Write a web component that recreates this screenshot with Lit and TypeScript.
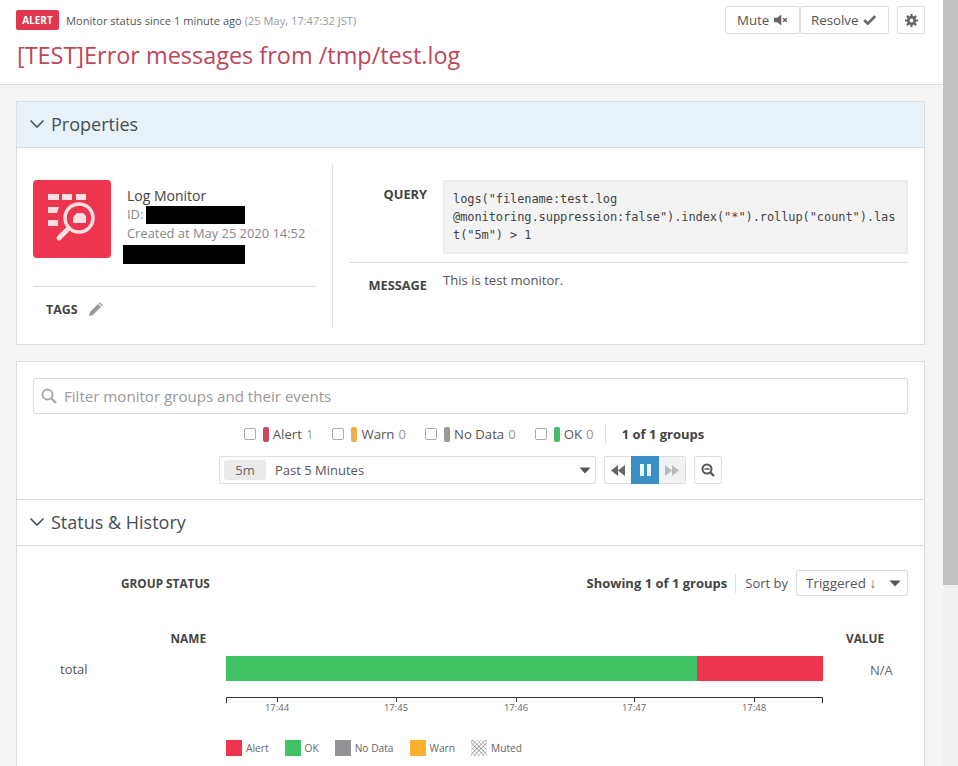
import { LitElement, html, css, svg } from "lit";
import { customElement } from "lit/decorators.js";

const chevron = html`<svg class="chev" width="16" height="10" viewBox="0 0 16 10"><path d="M1.5 1.5 8 8l6.5-6.5" fill="none" stroke="#4a5560" stroke-width="1.6"/></svg>`;
const caret = html`<svg class="caret" width="12" height="7" viewBox="0 0 12 7"><path d="M0.5 0.5h11L6 6.5z" fill="#555"/></svg>`;

@customElement("app-root")
export class AppRoot extends LitElement {
  static styles = css`
    :host { display: flex; width: 958px; height: 766px; overflow: hidden; font-family: "Open Sans", "Noto Sans", sans-serif; color: #444; background: #f5f5f5; }
    * { box-sizing: border-box; }
    .page { width: 943px; flex: none; height: 766px; overflow: hidden; }
    .scroll { width: 15px; flex: none; background: #f1f1f1; }
    .thumb { height: 585px; background: #c1c1c1; }
    .top { background: #fff; height: 85px; border-bottom: 1px solid #ddd; padding: 6px 18px 0 16px; display: flex; justify-content: space-between; }
    .status { display: flex; align-items: center; gap: 7px; font-size: 11.1px; margin-top: 4px; height: 20px; color: #555; }
    .badge { background: #e0364f; color: #fff; font-weight: 700; font-size: 10px; border-radius: 2px; padding: 0 4px; height: 20px; line-height: 20px; width: 43px; text-align: center; }
    .status span.t { color: #999; }
    h1 { margin: 8px 0 0 1px; font-size: 23.45px; font-weight: 400; line-height: 34px; color: #c0465a; }
    .acts { display: flex; align-items: flex-start; }
    .btn { height: 28px; border: 1px solid #ddd; border-radius: 2px; background: #fff; display: flex; align-items: center; gap: 5px; font-size: 13.3px; color: #555; padding: 0 11px; }
    .btn.gear { width: 28px; padding: 0; justify-content: center; margin-left: 8px; }
    .btn.mute { width: 75px; }
    .btn.res { width: 89px; padding-left: 10px; }
    .card { margin: 16px 18px 0 16px; background: #fff; border: 1px solid #ddd; }
    .phead { height: 46px; background: #eaf2f9; border-bottom: 1px solid #ddd; display: flex; align-items: center; padding: 0 0 2px 12px; gap: 6px; font-size: 18px; color: #444e57; }
    .shead { height: 47px; border-top: 1px solid #ddd; border-bottom: 1px solid #ddd; display: flex; align-items: center; padding: 0 0 2px 12px; gap: 6px; font-size: 18px; color: #444e57; }
    .pbody { display: flex; height: 196px; padding-top: 16px; }
    .left { width: 316px; height: 163px; border-right: 1px solid #ddd; padding-left: 16px; }
    .mon { display: flex; height: 123px; border-bottom: 1px solid #ddd; width: 283px; }
    .ico { width: 78px; height: 78px; background: #ed354f; border-radius: 4px; margin-top: 16px; flex: none; }
    .info { margin-left: 16px; margin-top: 22px; font-size: 12.9px; line-height: 19px; color: #888; position: relative; flex: 1; white-space: nowrap; }
    .info .n { color: #444; font-size: 14px; line-height: 19px; }
    .mask { background: #000; display: inline-block; vertical-align: top; height: 18px; }
    .idline { display: flex; }
    .idm { width: 99px; margin: 1px 0 0 3px; }
    .m2 { width: 122px; height: 19px; margin: 2px 0 0 -4px; display: block; }
    .tags { display: flex; align-items: center; gap: 10px; font-size: 12.4px; font-weight: 700; color: #444; padding: 14px 0 0 13px; }
    .right { flex: 1; padding: 16px 16px 0 16px; }
    .row { display: flex; }
    .lbl { width: 78px; text-align: right; font-size: 12.8px; font-weight: 700; color: #444; flex: none; }
    .qlbl { padding-top: 5px; }
    .qrow { border-bottom: 1px solid #ddd; padding-bottom: 8px; }
    .code { margin-left: 16px; flex: 1; background: #f3f3f3; border: 2px solid #ececec; height: 74px; padding: 8px 9px 8px 8px; font: 12px/18px "DejaVu Sans Mono", monospace; letter-spacing: -0.09px; color: #444; word-break: break-all; }
    .msg { font-size: 13.1px; color: #555; margin-left: 16px; padding-top: 8px; line-height: 18px; }
    .mrow .lbl { padding-top: 13px; }
    .group { margin-top: 16px; padding-bottom: 60px; }
    .filter { margin: 16px 16px 0; height: 36px; border: 1px solid #ddd; border-radius: 2px; display: flex; align-items: center; padding-left: 7px; gap: 7px; color: #999; font-size: 15.1px; }
    .states { display: flex; align-items: center; justify-content: center; height: 20px; margin-top: 10px; font-size: 13.2px; color: #555; padding-left: 7px; }
    .st { display: flex; align-items: center; margin-right: 19px; }
    .box { width: 12px; height: 12px; border: 1px solid #aaa; border-radius: 2px; margin-right: 7px; }
    .pill { width: 6px; height: 15px; border-radius: 2px; margin-right: 4px; }
    .st b { font-weight: 400; color: #999; margin-left: 4px; }
    .count { border-left: 1px solid #ddd; height: 19px; line-height: 19px; padding-left: 16px; margin-left: -8px; font-weight: 700; font-size: 13px; color: #444; }
    .time { display: flex; margin: 12px 0 0 202px; height: 28px; }
    .sel { width: 377px; border: 1px solid #ddd; border-radius: 2px; display: flex; align-items: center; padding: 0 5px 0 4px; font-size: 13px; color: #555; position: relative; }
    .chip { background: #eaeaea; border-radius: 3px; width: 42px; height: 20px; line-height: 20px; text-align: center; margin-right: 9px; color: #666; }
    .sel .caret { margin-left: auto; margin-right: -1px; }
    .sort .caret { margin-left: auto; margin-right: 6px; }
    .ctl { display: flex; margin-left: 8px; border: 1px solid #ddd; border-radius: 2px; height: 28px; width: 82px; }
    .ctl div { flex: 1; display: flex; align-items: center; justify-content: center; }
    .ctl .on { background: #3a8fc4; height: 28px; margin-top: -1px; flex: none; width: 28px; }
    .ctl .off { background: #f2f2f2; }
    .zoom { margin-left: 8px; width: 28px; height: 28px; border: 1px solid #ddd; border-radius: 2px; display: flex; align-items: center; justify-content: center; }
    .hr { height: 15px; }
    .gs { display: flex; align-items: center; height: 30px; margin-top: 22px; padding: 0 16px 0 104px; font-size: 11.8px; font-weight: 700; color: #444; }
    .gs .sp { flex: 1; }
    .gs .show { font-size: 13px; }
    .gs .sb { font-weight: 400; font-size: 13px; color: #555; border-left: 1px solid #ddd; margin-left: 8px; padding-left: 9px; margin-right: 8px; line-height: 19px; }
    .sort { width: 112px; height: 26px; border: 1px solid #ddd; border-radius: 2px; display: flex; align-items: center; padding-left: 9px; font-weight: 400; font-size: 13.5px; color: #555; }
    .chart { margin-top: 32px; display: grid; grid-template-columns: 209px 597px 1fr; }
    .hn { text-align: right; font-size: 11.8px; font-weight: 700; color: #444; height: 26px; line-height: 17px; padding-right: 20px; }
    .hv { font-size: 11.8px; font-weight: 700; color: #444; padding-left: 23px; line-height: 17px; }
    .tot { font-size: 13px; color: #555; padding: 1px 0 0 43px; line-height: 25px; }
    .bar { display: flex; height: 25px; }
    .ok { width: 471px; background: #40c364; }
    .bad { width: 126px; background: #ed354f; }
    .na { font-size: 13px; color: #666; padding-left: 47px; line-height: 28px; }
    .axis { grid-column: 2; margin-top: 13px; display: block; overflow: visible; }
    .axis text { font: 9.5px "Open Sans", sans-serif; fill: #666; }
    .legend { display: flex; align-items: center; margin: 19px 0 0 209px; font-size: 10.2px; color: #666; height: 16px; }
    .lg { display: flex; align-items: center; gap: 4px; margin-right: 16px; }
    .sw { width: 16px; height: 16px; }
    .muted { background: repeating-linear-gradient(45deg, #ccc 0 1px, #fff 1px 3px), repeating-linear-gradient(-45deg, #ccc 0 1px, transparent 1px 3px); background-blend-mode: multiply; }
  `;

  render() {
    const ticks: [number, string][] = [[51, "17:44"], [170, "17:45"], [290, "17:46"], [408, "17:47"], [528, "17:48"]];
    return html`
      <div class="page">
        <div class="top">
          <div>
            <div class="status"><span class="badge">ALERT</span><span>Monitor status since 1 minute ago <span class="t">(25 May, 17:47:32 JST)</span></span></div>
            <h1>[TEST]Error messages from /tmp/test.log</h1>
          </div>
          <div class="acts">
            <div class="btn mute">Mute
              <svg width="15" height="12" viewBox="0 0 15 12"><path d="M0 3.500h3.500L8 0v12L3.500 8.500H0z" fill="#666"/><path d="M10 4l4 4m0-4l-4 4" stroke="#666" stroke-width="1.700"/></svg>
            </div>
            <div class="btn res">Resolve
              <svg width="15" height="12" viewBox="0 0 15 12"><path d="M1.300 6 5.300 10 13.500 1.700" fill="none" stroke="#666" stroke-width="3"/></svg>
            </div>
            <div class="btn gear">
              <svg width="13" height="13" viewBox="0 0 13 13"><circle cx="6.500" cy="6.500" r="3.400" fill="none" stroke="#666" stroke-width="2.400"/><path d="M6.500 0v13M0 6.500h13M1.900 1.900l9.200 9.200M11.100 1.900l-9.200 9.200" stroke="#666" stroke-width="2.200"/><circle cx="6.500" cy="6.500" r="1.900" fill="#fff"/></svg>
            </div>
          </div>
        </div>

        <div class="card">
          <div class="phead">${chevron}Properties</div>
          <div class="pbody">
            <div class="left">
              <div class="mon">
                <div class="ico">
                  <svg width="78" height="78" viewBox="0 0 78 78" fill="#f9dfe2">
                    <rect x="15" y="14" width="11" height="6"/><rect x="29" y="14" width="10" height="6"/><rect x="43" y="14" width="10" height="6"/>
                    <path d="M15 27h11l-2 6h-9zM15 40h10v6H15z"/>
                    <circle cx="46" cy="38" r="14" fill="none" stroke="#f9dfe2" stroke-width="3.500"/>
                    <path d="M41 36l3-3h6l3 3v7H40v-5z"/>
                    <path d="M34 50 26 58" stroke="#f9dfe2" stroke-width="5" stroke-linecap="round"/>
                  </svg>
                </div>
                <div class="info">
                  <div class="n">Log Monitor</div>
                  <div class="idline">ID:<span class="mask idm"></span></div>
                  <div>Created at May 25 2020 14:52</div>
                  <span class="mask m2"></span>
                </div>
              </div>
              <div class="tags">TAGS
                <svg width="15" height="15" viewBox="0 0 15 15"><path d="M1 14l1-4 8-8 3 3-8 8z" fill="#999"/><path d="M10.800 1.200l1-.9 3 3-.9 1z" fill="#999"/></svg>
              </div>
            </div>
            <div class="right">
              <div class="row qrow">
                <div class="lbl qlbl">QUERY</div>
                <div class="code">logs("filename:test.log<br />@monitoring.suppression:false").index("*").rollup("count").last("5m") &gt; 1</div>
              </div>
              <div class="row mrow">
                <div class="lbl">MESSAGE</div>
                <div class="msg">This is test monitor.</div>
              </div>
            </div>
          </div>
        </div>

        <div class="card group">
          <div class="filter">
            <svg width="16" height="16" viewBox="0 0 16 16"><circle cx="6.500" cy="6.500" r="5" fill="none" stroke="#aaa" stroke-width="2"/><path d="M10.500 10.500 15 15" stroke="#aaa" stroke-width="2.400"/></svg>
            Filter monitor groups and their events
          </div>
          <div class="states">
            ${[["Alert", "1", "#c94a5a"], ["Warn", "0", "#eeb04a"], ["No Data", "0", "#999"], ["OK", "0", "#4bb96b"]].map(
              ([n, c, col]) => html`<div class="st"><span class="box"></span><span class="pill" style="background:${col}"></span>${n}<b>${c}</b></div>`
            )}
            <div class="count">1 of 1 groups</div>
          </div>
          <div class="time">
            <div class="sel"><span class="chip">5m</span>Past 5 Minutes${caret}</div>
            <div class="ctl">
              <div><svg width="14" height="11" viewBox="0 0 14 11"><path d="M7 0v11L0 5.500zM14 0v11L7 5.500z" fill="#666"/></svg></div>
              <div class="on"><svg width="13" height="12" viewBox="0 0 13 12"><path d="M1 0h4v12H1zM8 0h4v12H8z" fill="#eaf6fb"/></svg></div>
              <div class="off"><svg width="14" height="11" viewBox="0 0 14 11"><path d="M0 0v11l7-5.500zM7 0v11l7-5.500z" fill="#bbb"/></svg></div>
            </div>
            <div class="zoom"><svg width="14" height="14" viewBox="0 0 14 14"><circle cx="6" cy="6" r="4.500" fill="none" stroke="#555" stroke-width="2"/><path d="M3.500 6h5" stroke="#555" stroke-width="1.500"/><path d="M9.500 9.500 13 13" stroke="#555" stroke-width="2.200"/></svg></div>
          </div>
          <div class="hr"></div>
          <div class="shead">${chevron}Status &amp; History</div>
          <div class="gs">
            GROUP STATUS<span class="sp"></span>
            <span class="show">Showing 1 of 1 groups</span><span class="sb">Sort by</span>
            <div class="sort">Triggered ↓${caret}</div>
          </div>
          <div class="chart">
            <div class="hn">NAME</div><div></div><div class="hv">VALUE</div>
            <div class="tot">total</div>
            <div class="bar"><div class="ok"></div><div class="bad"></div></div>
            <div class="na">N/A</div>
            <svg class="axis" width="597" height="24" viewBox="0 0 597 24">
              <path d="M.5 6V.5h596V6" fill="none" stroke="#333"/>
              ${ticks.map(([x, t]) => svg`<path d="M${x}.5 0v5" stroke="#333"/><text x="${x}" y="14" text-anchor="middle">${t}</text>`)}
            </svg>
          </div>
          <div class="legend">
            ${[["Alert", "#ed354f"], ["OK", "#40c364"], ["No Data", "#929297"], ["Warn", "#fbb12c"]].map(
              ([n, c]) => html`<div class="lg"><span class="sw" style="background:${c}"></span>${n}</div>`
            )}
            <div class="lg"><span class="sw muted"></span>Muted</div>
          </div>
        </div>
      </div>
      <div class="scroll"><div class="thumb"></div></div>
    `;
  }
}
